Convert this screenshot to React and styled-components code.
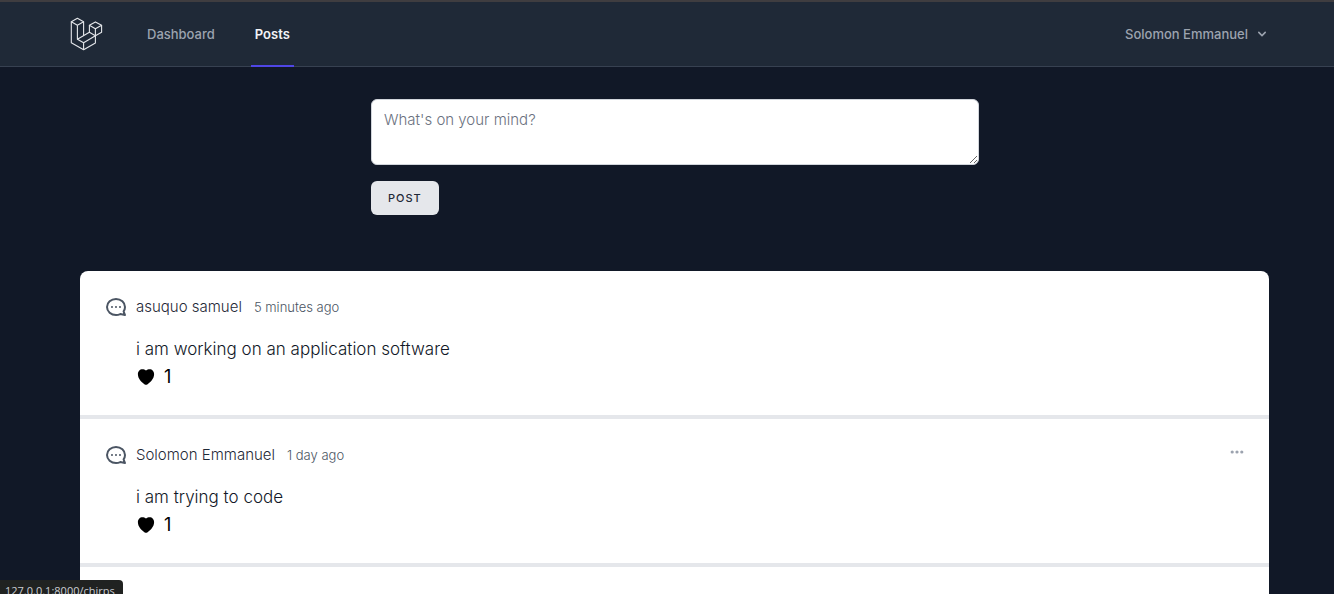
import React from 'react'
import styled, { createGlobalStyle } from 'styled-components'

const GlobalStyle = createGlobalStyle`
  *, *::before, *::after {
    box-sizing: border-box;
  }
  body {
    margin: 0;
    background-color: #111827;
    font-family: Inter, 'Liberation Sans', sans-serif;
  }
`;

const Page = styled.div`
  min-height: 100vh;
  display: flex;
  flex-direction: column;
`;

const Nav = styled.nav`
  background-color: #1f2937;
  border-top: 2px solid #3f3d40;
  border-bottom: 1px solid #374151;
  padding-left: 16px;
`;

const NavInner = styled.div`
  max-width: 1216px;
  height: 64px;
  margin: 0 auto;
  display: flex;
  align-items: center;
`;

const LogoLink = styled.a`
  display: flex;
  margin-right: 40px;
`;

const NavLinks = styled.div`
  display: flex;
  align-self: stretch;
  gap: 32px;
  margin-bottom: -1px;
`;

const NavLink = styled.a`
  display: flex;
  align-items: center;
  padding: 0 4px;
  border-bottom: 2px solid ${props => (props.$active ? '#4f46e5' : 'transparent')};
  color: ${props => (props.$active ? '#f3f4f6' : '#9ca3af')};
  font-size: 13px;
  font-weight: ${props => (props.$active ? 600 : 500)};
  line-height: 20px;
  text-decoration: none;
`;

const UserButton = styled.button`
  display: flex;
  align-items: center;
  gap: 6px;
  margin-left: auto;
  padding: 8px 13px;
  border: none;
  background: none;
  color: #9ca3af;
  font-family: inherit;
  font-size: 13px;
  font-weight: 500;
  line-height: 16px;
  cursor: pointer;
`;

const Main = styled.main`
  flex: 1;
  display: flex;
  flex-direction: column;
`;

const Composer = styled.form`
  padding: 32px 0 56px 16px;
`;

const ComposerInner = styled.div`
  max-width: 608px;
  margin: 0 auto;
  display: flex;
  flex-direction: column;
  align-items: flex-start;
  gap: 16px;
`;

const TextArea = styled.textarea`
  display: block;
  width: 100%;
  height: 66px;
  padding: 8px 12px;
  border: 1px solid #d1d5db;
  border-radius: 6px;
  background-color: white;
  font-family: inherit;
  font-size: 15px;
  font-weight: 350;
  line-height: 24px;
  resize: vertical;

  &::placeholder {
    color: #6b7280;
  }
`;

const SubmitButton = styled.button`
  padding: 9px 16px;
  border: 1px solid transparent;
  border-radius: 6px;
  background-color: #e5e7eb;
  color: #1f2937;
  font-family: inherit;
  font-size: 11px;
  font-weight: 500;
  line-height: 14px;
  letter-spacing: 1px;
  text-transform: uppercase;
  cursor: pointer;
`;

const Feed = styled.section`
  flex: 1;
  margin: 0 65px 0 80px;
  background-color: white;
  border-radius: 8px 8px 0 0;
  font-weight: 350;
`;

const Post = styled.article`
  display: flex;
  gap: 8px;
  padding: 24px;
  border-bottom: 4px solid #e5e7eb;
`;

const PostContent = styled.div`
  flex: 1;
`;

const PostHeader = styled.div`
  display: flex;
  align-items: baseline;
  gap: 12px;
  height: 24px;
  line-height: 24px;
`;

const Author = styled.span`
  color: #1f2937;
  font-size: 15px;
`;

const Time = styled.small`
  color: #4b5563;
  font-size: 13px;
`;

const MenuButton = styled.button`
  display: flex;
  margin-left: auto;
  align-self: flex-start;
  padding: 1px 0;
  border: none;
  background: none;
  color: #9ca3af;
  cursor: pointer;
`;

const Message = styled.p`
  margin: 16px 0 0;
  color: #111827;
  font-size: 17px;
  line-height: 28px;
`;

const LikeButton = styled.button`
  display: flex;
  align-items: center;
  gap: 8px;
  padding: 0;
  border: none;
  background: none;
  color: black;
  font-family: inherit;
  font-size: 18px;
  line-height: 28px;
  cursor: pointer;
`;

const StatusBar = styled.div`
  position: fixed;
  left: 0;
  bottom: 0;
  height: 14px;
  padding: 2px 8px 0 5px;
  overflow: hidden;
  border-top-right-radius: 4px;
  background-color: #202221;
  color: #c9cdd3;
  font-family: 'Open Sans', sans-serif;
  font-size: 11px;
  line-height: 18px;
`;

const Logo = () => (
  <svg width="36" height="36" viewBox="67 16 36 36" fill="none" stroke="#e5e7eb" strokeWidth="1.1" strokeLinejoin="round">
    <path d="M71.3 21.7 77.4 18.3 83.6 21.7 77.4 25.2Z" />
    <path d="M71.3 21.7V42.8L83.6 49.8 95.4 43V28.7" />
    <path d="M77.4 25.2V39.2L83.6 42.7V49.8" />
    <path d="M83.6 21.7V35.7M77.4 39.2 89.4 32.3 95.4 35.7 83.6 42.7" />
    <path d="M89.4 25.3 95.4 21.9 101.6 25.3 95.4 28.7Z" />
    <path d="M89.4 25.3V32.3M101.6 25.3V32.3L95.4 35.7" />
  </svg>
)

const ChevronIcon = () => (
  <svg width="16" height="16" viewBox="0 0 20 20" fill="currentColor">
    <path fillRule="evenodd" d="M5.293 7.293a1 1 0 011.414 0L10 10.586l3.293-3.293a1 1 0 111.414 1.414l-4 4a1 1 0 01-1.414 0l-4-4a1 1 0 010-1.414z" clipRule="evenodd" />
  </svg>
)

const ChatIcon = () => (
  <svg width="24" height="24" viewBox="0 0 24 24" fill="none" stroke="#4b5563" strokeWidth="2" strokeLinecap="round" strokeLinejoin="round">
    <path transform="translate(24 0) scale(-1 1)" d="M8 12h.01M12 12h.01M16 12h.01M21 12c0 4.418-4.03 8-9 8a9.863 9.863 0 01-4.255-.949L3 20l1.395-3.72C3.512 15.042 3 13.574 3 12c0-4.418 4.03-8 9-8s9 3.582 9 8z" />
  </svg>
)

const DotsIcon = () => (
  <svg width="16" height="16" viewBox="0 0 20 20" fill="currentColor">
    <path d="M6 10a2 2 0 11-4 0 2 2 0 014 0zM12 10a2 2 0 11-4 0 2 2 0 014 0zM16 12a2 2 0 100-4 2 2 0 000 4z" />
  </svg>
)

const HeartIcon = () => (
  <svg width="20" height="20" viewBox="0 0 20 20" fill="currentColor">
    <path d="M10 3.6C8.9 2.5 7.7 2.2 6.4 2.2 3.8 2.2 1.9 4.3 1.9 7.2c0 4.4 3.7 8.1 6.8 10.2.9.6 1.7.6 2.6 0 3.1-2.1 6.8-5.8 6.8-10.2 0-2.9-1.9-5-4.5-5-1.3 0-2.5.3-3.6 1.4z" />
  </svg>
)

const posts = [
  { id: 1, author: 'asuquo samuel', time: '5 minutes ago', message: 'i am working on an application software', likes: 1, own: false },
  { id: 2, author: 'Solomon Emmanuel', time: '1 day ago', message: 'i am trying to code', likes: 1, own: true },
]

const App = () => {
  return (
    <Page>
      <GlobalStyle />
      <Nav>
        <NavInner>
          <LogoLink href="#" aria-label="Home"><Logo /></LogoLink>
          <NavLinks>
            <NavLink href="#">Dashboard</NavLink>
            <NavLink href="#" $active>Posts</NavLink>
          </NavLinks>
          <UserButton type="button">
            Solomon Emmanuel
            <ChevronIcon />
          </UserButton>
        </NavInner>
      </Nav>
      <Main>
        <Composer onSubmit={e => e.preventDefault()}>
          <ComposerInner>
            <TextArea name="message" aria-label="Message" placeholder="What's on your mind?" />
            <SubmitButton type="submit">Post</SubmitButton>
          </ComposerInner>
        </Composer>
        <Feed>
          {posts.map(post => (
            <Post key={post.id}>
              <ChatIcon />
              <PostContent>
                <PostHeader>
                  <Author>{post.author}</Author>
                  <Time>{post.time}</Time>
                  {post.own && <MenuButton type="button" aria-label="Post options"><DotsIcon /></MenuButton>}
                </PostHeader>
                <Message>{post.message}</Message>
                <LikeButton type="button" aria-label="Like">
                  <HeartIcon />
                  {post.likes}
                </LikeButton>
              </PostContent>
            </Post>
          ))}
        </Feed>
      </Main>
      <StatusBar>127.0.0.1:8000/chirps</StatusBar>
    </Page>
  )
}

export default App
